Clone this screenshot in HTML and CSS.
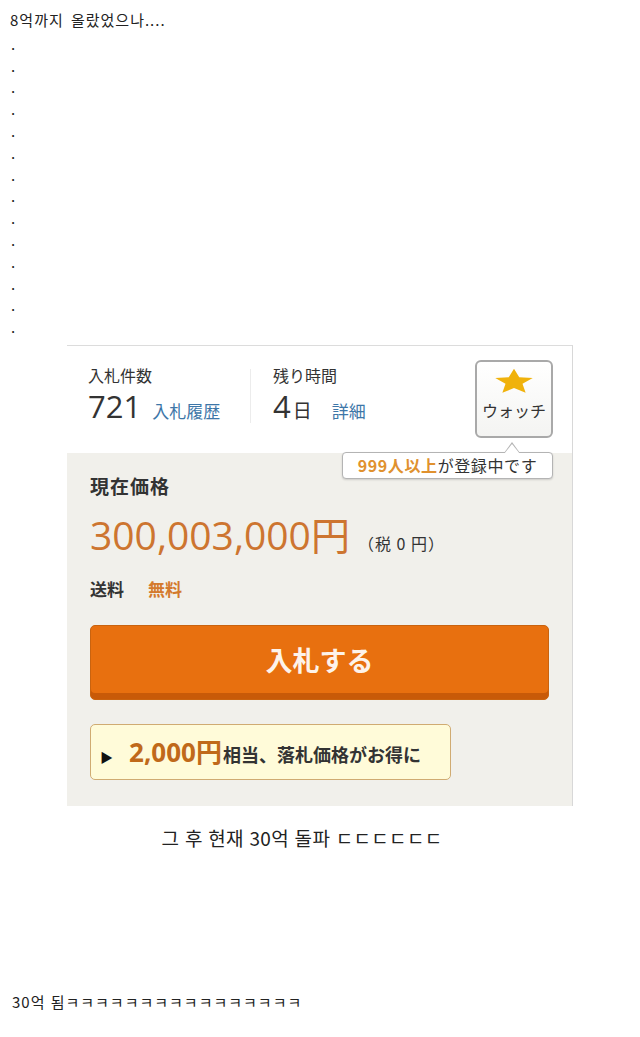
FILE: index.html
```html
<!DOCTYPE html>
<html lang="ko">
<head>
  <meta charset="UTF-8">
  <title>30억 돌파</title>
  <link rel="stylesheet" href="styles.css">
</head>
<body>
  <div class="intro">
    <p>8억까지 올랐었으나....</p>
    <p class="dot">.</p><p class="dot">.</p><p class="dot">.</p><p class="dot">.</p>
    <p class="dot">.</p><p class="dot">.</p><p class="dot">.</p><p class="dot">.</p>
    <p class="dot">.</p><p class="dot">.</p><p class="dot">.</p><p class="dot">.</p>
    <p class="dot">.</p><p class="dot">.</p>
  </div>

  <div class="auction" lang="ja">
    <div class="top">
      <div class="stat">
        <div class="label">入札件数</div>
        <div class="value"><span class="big">721</span><a class="link">入札履歴</a></div>
      </div>
      <div class="divider"></div>
      <div class="stat">
        <div class="label">残り時間</div>
        <div class="value"><span class="big">4</span><span class="unit">日</span><a class="link">詳細</a></div>
      </div>
      <div class="watch">
        <svg class="star" width="40" height="26" viewBox="0 0 32 31" preserveAspectRatio="none">
          <path d="M16 1 L20.2 10.9 L31 11.8 L22.8 18.9 L25.3 29.5 L16 23.9 L6.7 29.5 L9.2 18.9 L1 11.8 L11.8 10.9 Z" fill="#f0b20c"/>
        </svg>
        <span>ウォッチ</span>
        <div class="tip"><b>999人以上</b>が登録中です</div>
      </div>
    </div>

    <div class="price-area">
      <div class="heading">現在価格</div>
      <div class="price">300,003,000円<span class="tax">（税 0 円）</span></div>
      <div class="ship">送料<span class="free">無料</span></div>
      <button class="bid">入札する</button>
      <div class="deal"><span class="arrow">▶</span><span class="amount">2,000円</span>相当、落札価格がお得に</div>
    </div>
  </div>

  <p class="caption">그 후 현재 30억 돌파 ㄷㄷㄷㄷㄷㄷ</p>

  <p class="outro">30억 됨ㅋㅋㅋㅋㅋㅋㅋㅋㅋㅋㅋㅋㅋㅋㅋㅋ</p>
</body>
</html>
```

FILE: styles.css
```css
* {
  box-sizing: border-box;
}
body {
  margin: 0;
  padding: 9px 0 0 0;
  font-family: "Noto Sans CJK KR", "Noto Sans", sans-serif;
  color: #222;
  background: #fff;
}
p {
  margin: 0;
}
.intro {
  padding-left: 10px;
  font-size: 15px;
  line-height: 21.8px;
}
.intro p:first-child {
  letter-spacing: 1px;
  word-spacing: 2px;
}
.dot {
  padding-left: 1px;
  position: relative;
  top: 2px;
}

.auction {
  width: 506px;
  margin: 9px 0 0 67px;
  border-top: 1px solid #dcdcdc;
  border-right: 1px solid #d8d8d8;
  font-family: "Noto Sans CJK JP", sans-serif;
}
.top {
  display: flex;
  align-items: flex-start;
  height: 107px;
  padding: 17px 19px 0 21px;
  background: #fff;
}
.stat {
  width: 162px;
}
.stat + .divider + .stat {
  width: 200px;
  padding-left: 22px;
}
.label {
  font-size: 16px;
  color: #333;
  line-height: 24px;
}
.value {
  display: flex;
  align-items: baseline;
  color: #333;
  line-height: 38px;
}
.big {
  font-family: "Open Sans", "Liberation Sans", sans-serif;
  font-size: 31px;
}
.unit {
  font-size: 19px;
  margin-left: 2px;
}
.link {
  color: #3d76a8;
  font-size: 17px;
  margin-left: 11px;
}
.stat + .divider + .stat .link {
  margin-left: 20px;
}
.divider {
  width: 1px;
  height: 54px;
  margin-top: 6px;
  background: #ececec;
}
.watch {
  margin-left: auto;
  width: 78px;
  height: 78px;
  margin-top: -3px;
  border: 2px solid #a9a9a9;
  border-radius: 6px;
  background: linear-gradient(#fff, #f4f4f2);
  display: flex;
  flex-direction: column;
  align-items: center;
  padding-top: 6px;
  font-size: 16px;
  color: #333;
  position: relative;
}
.star {
  display: block;
}
.watch span {
  margin-top: 5px;
  line-height: 22px;
}
.tip {
  position: absolute;
  top: 90px;
  right: -2px;
  width: 211px;
  height: 27px;
  border: 1px solid #b4b4b4;
  border-radius: 4px;
  background: #fff;
  box-shadow: 0 1px 2px rgba(0,0,0,0.15);
  font-size: 16px;
  letter-spacing: 0.6px;
  line-height: 25px;
  text-align: center;
  color: #333;
  white-space: nowrap;
  z-index: 2;
}
.tip b {
  color: #e0912e;
}
.tip::before,
.tip::after {
  content: "";
  position: absolute;
  right: 32px;
  border: 8px solid transparent;
  border-top: 0;
}
.tip::before {
  top: -11px;
  border-bottom: 11px solid #b4b4b4;
}
.tip::after {
  top: -9px;
  border-bottom: 10px solid #fff;
}

.price-area {
  background: #f1f0eb;
  padding: 19px 23px 26px 23px;
}
.heading {
  font-size: 19px;
  letter-spacing: 1px;
  font-weight: bold;
  color: #333;
  line-height: 28px;
}
.price {
  display: flex;
  align-items: baseline;
  margin-top: 10px;
  font-family: "Open Sans", "Noto Sans CJK JP", sans-serif;
  font-size: 39px;
  color: #cd7530;
  line-height: 50px;
}
.price .tax {
  font-family: "Noto Sans CJK JP", sans-serif;
  font-size: 16px;
  letter-spacing: 1px;
  color: #333;
  margin-left: 8px;
}
.ship {
  margin-top: 9px;
  font-size: 17px;
  font-weight: bold;
  color: #333;
  line-height: 24px;
}
.free {
  color: #d47a2d;
  margin-left: 24px;
}
.bid {
  display: block;
  width: 100%;
  height: 75px;
  margin-top: 24px;
  border: 1px solid #c9630f;
  border-radius: 5px;
  background: #e8700f;
  box-shadow: inset 0 -6px 0 #c85a08;
  color: #fdf3ea;
  font-family: "Noto Sans CJK JP", sans-serif;
  font-size: 27px;
  font-weight: bold;
  padding-bottom: 6px;
}
.deal {
  display: flex;
  align-items: baseline;
  width: 361px;
  height: 56px;
  margin-top: 24px;
  padding: 0 0 0 9px;
  border: 1px solid #d0ab72;
  border-radius: 5px;
  background: #fffbd9;
  font-size: 18px;
  font-weight: bold;
  color: #333;
  line-height: 54px;
}
.arrow {
  font-size: 13px;
  color: #111;
  margin-right: 16px;
}
.amount {
  font-family: "Open Sans", "Noto Sans CJK JP", sans-serif;
  font-size: 26px;
  color: #c0691a;
  margin-right: 1px;
}

.caption {
  margin-top: 18px;
  padding-right: 36px;
  text-align: center;
  font-size: 19px;
  letter-spacing: 0.3px;
  line-height: 28px;
  color: #222;
}
.outro {
  margin-top: 139px;
  padding-left: 12px;
  font-size: 15px;
  letter-spacing: 1px;
  line-height: 22px;
  color: #222;
}
```
